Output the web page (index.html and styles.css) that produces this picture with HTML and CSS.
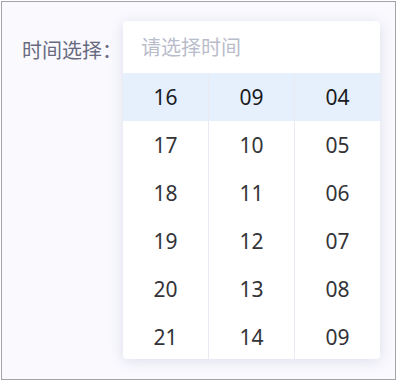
FILE: index.html
```html
<!DOCTYPE html>
<html>
<head>
  <meta charset="UTF-8">
  <title>时间选择</title>
  <link rel="stylesheet" href="styles.css">
</head>
<body>
  <div class="frame">
    <label class="field-label">时间选择：</label>
    <div class="picker">
      <div class="picker-input">请选择时间</div>
      <div class="picker-columns">
        <div class="column">
          <div class="cell active">16</div>
          <div class="cell">17</div>
          <div class="cell">18</div>
          <div class="cell">19</div>
          <div class="cell">20</div>
          <div class="cell">21</div>
        </div>
        <div class="column">
          <div class="cell active">09</div>
          <div class="cell">10</div>
          <div class="cell">11</div>
          <div class="cell">12</div>
          <div class="cell">13</div>
          <div class="cell">14</div>
        </div>
        <div class="column">
          <div class="cell active">04</div>
          <div class="cell">05</div>
          <div class="cell">06</div>
          <div class="cell">07</div>
          <div class="cell">08</div>
          <div class="cell">09</div>
        </div>
      </div>
    </div>
  </div>
</body>
</html>
```

FILE: styles.css
```css
html, body {
  margin: 0;
  background-color: #ffffff;
}

body {
  padding: 1px;
  font-family: "Noto Sans", "Noto Sans CJK SC", sans-serif;
}

.frame {
  box-sizing: border-box;
  width: 395px;
  height: 379px;
  border: 1px solid #a3a3a8;
  background-color: #f9f9fe;
  display: flex;
  align-items: flex-start;
  padding: 19px 0 0 20px;
  overflow: hidden;
}

.field-label {
  width: 101px;
  flex-shrink: 0;
  margin-top: 15px;
  font-size: 20px;
  line-height: 28px;
  color: #686a7e;
  font-family: "Noto Sans CJK SC", sans-serif;
}

.picker {
  width: 257px;
  height: 338px;
  background-color: #ffffff;
  border-radius: 4px;
  box-shadow: 0 2px 14px rgba(90, 90, 140, 0.16);
  overflow: hidden;
}

.picker-input {
  height: 52px;
  line-height: 52px;
  padding-left: 18px;
  font-size: 20px;
  color: #b9bccb;
  font-family: "Noto Sans CJK SC", sans-serif;
}

.picker-columns {
  display: flex;
}

.column {
  flex: 1;
  border-left: 1px solid #e9ebf2;
}

.column:first-child {
  border-left: none;
}

.cell {
  height: 48px;
  line-height: 48px;
  text-align: center;
  font-size: 21px;
  color: #333338;
}

.cell.active {
  background-color: #e6f0fd;
  color: #1a1a1f;
}
```
